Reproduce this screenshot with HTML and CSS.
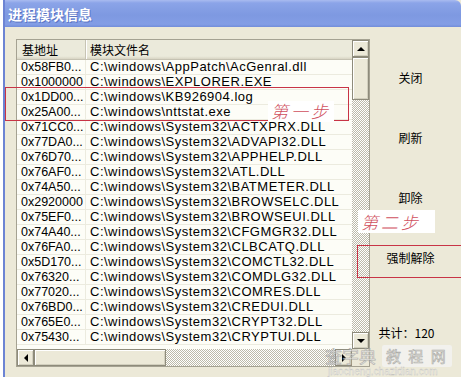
FILE: index.html
```
<!DOCTYPE html>
<html>
<head>
<meta charset="utf-8">
<link rel="stylesheet" href="styles.css">
</head>
<body>
<div class="screen">
  <div class="window">
    <div class="titlebar"><span class="title">进程模块信息</span></div>
    <div class="body">
      <div class="listbox">
        <div class="lb-top">
          <div class="view">
            <div class="row head"><div class="c1">基地址</div><div class="c2">模块文件名</div></div>
            <div class="row"><div class="c1">0x58FB0...</div><div class="c2">C:\windows\AppPatch\AcGenral.dll</div></div>
            <div class="row"><div class="c1">0x1000000</div><div class="c2">C:\windows\EXPLORER.EXE</div></div>
            <div class="row"><div class="c1">0x1DD00...</div><div class="c2">C:\windows\KB926904.log</div></div>
            <div class="row"><div class="c1">0x25A00...</div><div class="c2">C:\windows\nttstat.exe</div></div>
            <div class="row"><div class="c1">0x71CC0...</div><div class="c2">C:\windows\System32\ACTXPRX.DLL</div></div>
            <div class="row"><div class="c1">0x77DA0...</div><div class="c2">C:\windows\System32\ADVAPI32.DLL</div></div>
            <div class="row"><div class="c1">0x76D70...</div><div class="c2">C:\windows\System32\APPHELP.DLL</div></div>
            <div class="row"><div class="c1">0x76AF0...</div><div class="c2">C:\windows\System32\ATL.DLL</div></div>
            <div class="row"><div class="c1">0x74A50...</div><div class="c2">C:\windows\System32\BATMETER.DLL</div></div>
            <div class="row"><div class="c1">0x2920000</div><div class="c2">C:\windows\System32\BROWSELC.DLL</div></div>
            <div class="row"><div class="c1">0x75EF0...</div><div class="c2">C:\windows\System32\BROWSEUI.DLL</div></div>
            <div class="row"><div class="c1">0x74A40...</div><div class="c2">C:\windows\System32\CFGMGR32.DLL</div></div>
            <div class="row"><div class="c1">0x76FA0...</div><div class="c2">C:\windows\System32\CLBCATQ.DLL</div></div>
            <div class="row"><div class="c1">0x5D170...</div><div class="c2">C:\windows\System32\COMCTL32.DLL</div></div>
            <div class="row"><div class="c1">0x76320...</div><div class="c2">C:\windows\System32\COMDLG32.DLL</div></div>
            <div class="row"><div class="c1">0x77020...</div><div class="c2">C:\windows\System32\COMRES.DLL</div></div>
            <div class="row"><div class="c1">0x76BD0...</div><div class="c2">C:\windows\System32\CREDUI.DLL</div></div>
            <div class="row"><div class="c1">0x765E0...</div><div class="c2">C:\windows\System32\CRYPT32.DLL</div></div>
            <div class="row"><div class="c1">0x75430...</div><div class="c2">C:\windows\System32\CRYPTUI.DLL</div></div>
          </div>
          <div class="vscroll">
            <div class="sbtn"><span class="arr up"></span></div>
            <div class="vthumb"></div>
            <div class="track"></div>
            <div class="sbtn"><span class="arr down"></span></div>
          </div>
        </div>
        <div class="lb-bottom">
          <div class="hscroll">
            <div class="sbtn"><span class="arr left"></span></div>
            <div class="hthumb"></div>
            <div class="track"></div>
            <div class="sbtn"><span class="arr right"></span></div>
          </div>
          <div class="corner"></div>
        </div>
      </div>
      <div class="side">
        <div class="btn">关闭</div>
        <div class="btn">刷新</div>
        <div class="btn">卸除</div>
        <div class="btn last">强制解除</div>
        <div class="total">共计：120</div>
      </div>
    </div>
  </div>
  <div class="mark mark1"></div>
  <div class="note note1">第一步</div>
  <div class="note note2">第二步</div>
  <div class="mark mark2"></div>
  <div class="wm">
    <div class="wm-cn"><span>查字典</span><span class="wm-box">教 程 网</span></div>
    <div class="wm-en">jiaocheng.chazidian.com</div>
  </div>
</div>
</body>
</html>
```
FILE: styles.css
```
html, body {
  margin: 0;
  padding: 0;
  width: 461px;
  height: 377px;
  overflow: hidden;
  background: #fff;
}
.screen {
  position: relative;
  display: flex;
  height: 377px;
  padding-left: 3px;
  box-sizing: border-box;
  background: #fff;
  font-family: "Liberation Sans", "Noto Sans CJK SC", sans-serif;
}
.window {
  flex: 1;
  display: flex;
  flex-direction: column;
  border-left: 2px solid #6c84d4;
  background: #ece9d8;
}
.titlebar {
  height: 27px;
  flex: none;
  display: flex;
  align-items: center;
  padding-left: 3px;
  background: linear-gradient(to bottom, #a9bbf0 0, #8ba4e8 3px, #7e99e1 55%, #839de5 90%, #728dd9 100%);
  border-top-right-radius: 6px;
}
.title {
  color: #fff;
  font-family: "Noto Sans CJK SC", sans-serif;
  font-weight: bold;
  font-size: 14px;
  text-shadow: 1px 1px 0 #5a74c4;
}
.body {
  flex: 1;
  display: flex;
  align-items: flex-start;
  padding-top: 12px;
  padding-left: 11px;
}
.listbox {
  flex: none;
  width: 354px;
  box-sizing: border-box;
  border: 1px solid #a5a292;
  display: flex;
  flex-direction: column;
  background: #fdfdf7;
}
.lb-top {
  display: flex;
  height: 309px;
  flex: none;
}
.lb-bottom {
  display: flex;
  height: 17px;
  flex: none;
  background: #ece9d8;
}
.view {
  width: 335px;
  height: 309px;
  overflow: hidden;
}
.row {
  display: flex;
  height: 15px;
  box-sizing: border-box;
  border-bottom: 1px solid #ecebdf;
  font-size: 13px;
  letter-spacing: 0.5px;
  line-height: 14px;
  color: #000;
  white-space: nowrap;
}
.row .c1 {
  width: 69px;
  flex: none;
  box-sizing: border-box;
  padding-left: 4px;
  border-right: 1px solid #ecebdf;
  overflow: hidden;
  font-size: 12.5px;
  letter-spacing: 0;
}
.row .c2 {
  flex: 1;
  padding-left: 4px;
  overflow: hidden;
}
.row.head {
  height: 20px;
  line-height: 19px;
  background: linear-gradient(to bottom, #ebeadb 0, #ebeadb 85%, #d8d5c4 100%);
  border-bottom: 1px solid #c5c2b2;
  font-family: "Noto Sans CJK SC", sans-serif;
  font-size: 12px;
  letter-spacing: 0;
}
.row.head .c1 {
  padding-left: 5px;
  font-size: 12px;
  border-right: 1px solid #c7c4b4;
  box-shadow: 1px 0 0 #fff;
}
.vscroll {
  width: 17px;
  flex: none;
  display: flex;
  flex-direction: column;
}
.hscroll {
  width: 335px;
  flex: none;
  display: flex;
}
.sbtn {
  width: 17px;
  height: 17px;
  flex: none;
  box-sizing: border-box;
  background: #ece9d8;
  border: 1px solid #8e8b7b;
  box-shadow: inset 1px 1px 0 #fff, inset -1px -1px 0 #d2cfbe;
  display: flex;
  align-items: center;
  justify-content: center;
}
.arr {
  width: 0;
  height: 0;
  border: 4px solid transparent;
}
.arr.up { border-bottom-color: #000; border-top-width: 0; }
.arr.down { border-top-color: #000; border-bottom-width: 0; }
.arr.left { border-right-color: #000; border-left-width: 0; }
.arr.right { border-left-color: #000; border-right-width: 0; }
.vthumb {
  height: 43px;
  flex: none;
  box-sizing: border-box;
  background: #ece9d8;
  border: 1px solid #8e8b7b;
  box-shadow: inset 1px 1px 0 #fff, inset -1px -1px 0 #d2cfbe;
}
.hthumb {
  width: 132px;
  flex: none;
  box-sizing: border-box;
  background: #ece9d8;
  border: 1px solid #8e8b7b;
  box-shadow: inset 1px 1px 0 #fff, inset -1px -1px 0 #d2cfbe;
}
.track {
  flex: 1;
  background: repeating-conic-gradient(#bdbaa9 0 25%, #ffffff 0 50%) 0 0 / 2px 2px;
}
.corner {
  width: 17px;
  flex: none;
  background: #ece9d8;
}
.side {
  flex: 1;
  display: flex;
  flex-direction: column;
  align-items: center;
  padding-top: 24px;
  padding-right: 10px;
  font-family: "Noto Sans CJK SC", sans-serif;
  font-size: 12px;
  color: #000;
}
.btn {
  height: 30px;
  line-height: 30px;
  margin-bottom: 30px;
  text-align: center;
}
.btn.last {
  margin-bottom: 0;
}
.total {
  margin-top: 52px;
  line-height: 16px;
  padding-right: 8px;
  font-size: 12px;
}
.mark {
  position: absolute;
  box-sizing: border-box;
  border: 1px solid #c83446;
}
.mark1 {
  left: 5px;
  top: 87px;
  width: 344px;
  height: 34px;
}
.mark2 {
  left: 357px;
  top: 245px;
  width: 110px;
  height: 33px;
}
.note {
  position: absolute;
  background: #fff;
  color: #d0505e;
  font-family: "Noto Sans CJK SC", sans-serif;
  font-size: 17px;
  font-weight: 300;
  letter-spacing: 3px;
  line-height: 20px;
  font-style: italic;
  padding-left: 3px;
  box-sizing: border-box;
}
.note1 {
  left: 268px;
  top: 101px;
  width: 66px;
  height: 21px;
}
.note2 {
  left: 358px;
  top: 210px;
  width: 77px;
  height: 23px;
  line-height: 23px;
}
.wm {
  position: absolute;
  left: 325px;
  top: 345px;
  width: 130px;
  opacity: 0.75;
}
.wm-cn {
  display: flex;
  align-items: center;
  gap: 6px;
  font-family: "Noto Sans CJK SC", sans-serif;
  font-size: 17px;
  line-height: 22px;
  color: #e6e6e6;
  -webkit-text-stroke: 0.6px #9a9a9a;
}
.wm-box {
  background: #f4f4f4;
  padding: 0 4px;
  font-size: 15px;
  letter-spacing: 2px;
  border-radius: 2px;
}
.wm-en {
  font-family: "Liberation Sans", sans-serif;
  font-size: 10px;
  line-height: 10px;
  color: #f6f6f6;
  -webkit-text-stroke: 0.3px #b0b0b0;
  padding-left: 3px;
}
```
